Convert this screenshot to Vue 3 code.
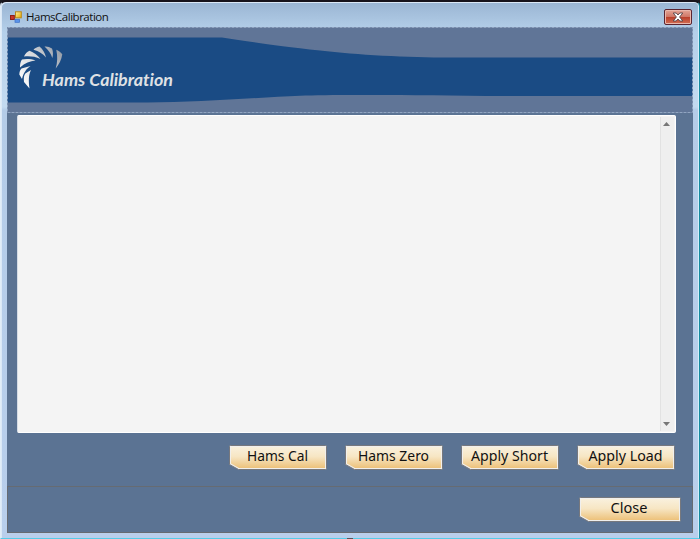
<script setup>
const actions = [
  { label: 'Hams Cal', width: 61 },
  { label: 'Hams Zero', width: 71 },
  { label: 'Apply Short', width: 77 },
  { label: 'Apply Load', width: 74 },
]
</script>

<template>
  <div class="window">
    <header class="titlebar">
      <svg class="app-icon" width="12" height="12" viewBox="0 0 12 12">
        <defs>
          <linearGradient id="gold" x2="1" y2="1"><stop stop-color="#fff3a0" /><stop offset="1" stop-color="#e5a800" /></linearGradient>
        </defs>
        <rect x="0.5" y="4.5" width="3.8" height="4" fill="#c9362b" stroke="#8e2017" />
        <rect x="5.5" y="0.8" width="5.8" height="6" fill="url(#gold)" stroke="#b98719" />
        <rect x="5" y="8.5" width="4.6" height="2.8" fill="#5b93e8" stroke="#3b6fc7" stroke-width=".7" />
      </svg>
      <span class="title">HamsCalibration</span>
      <button class="close-x" aria-label="Close window">
        <svg width="12" height="10" viewBox="0 0 12 10">
          <path d="M1.2 1h3L6 3l1.8-2h3L7.6 5l3.2 4h-3L6 7 4.2 9h-3L4.4 5z" fill="#fff" stroke="#554448" stroke-width=".9" />
        </svg>
      </button>
    </header>
    <main class="client">
      <section class="banner">
        <svg class="art" width="686" height="86" viewBox="0 0 686 86">
          <path d="M0 10.500H215C240 14 265 18.500 313 23.500C350 28 400 30.500 443 30.500H686V69H480C390 68 325 67.500 293 68.800C250 70.500 190 75.500 140 75.500H0Z" fill="#1a4b84" />
          <rect x=".5" y=".5" width="685" height="85" fill="none" stroke="#91a5c1" stroke-dasharray="3 1" />
          <defs>
            <linearGradient id="silver" gradientUnits="userSpaceOnUse" x1="13" y1="58" x2="55" y2="24"><stop stop-color="#fff" /><stop offset=".55" stop-color="#d5d8dc" /><stop offset="1" stop-color="#929aa5" /></linearGradient>
          </defs>
          <g fill="url(#silver)">
            <path d="M24 43C21.500 48 21.500 54 22.500 61.500L17 55C16.500 51 17 48 18.300 46.500Z" />
            <path d="M23.500 39C19 42 16.500 46 15 52L12.300 47.500C12.500 44.500 13 43 14.500 41.500Z" />
            <path d="M28.500 33.500C23 34 18 36 13 40.500C13 37 13.500 34.500 15 32.500C19 31.700 24 31.800 28.500 33.500Z" />
            <path d="M33.500 32C28 29.500 23 29 17 29.500C18 27 20 25 22.500 23.800C27 25.500 30.500 28 33.500 32Z" />
            <path d="M39 30.500C35.500 26.500 32 24.500 26.500 22.800C28 21 30 20 32.500 19.500C36 22.500 38 26 39 30.500Z" />
            <path d="M45.300 31C44 26.500 41.500 23 37.500 19.500C40.500 19.200 42.500 20 45 21.500C46.200 24.500 46.300 28 45.300 31Z" />
            <path d="M48.700 41.500C50.500 35.500 50.700 29.500 49.300 22.800C51.500 23.800 53.500 25.200 55.300 27.200C54.500 32.500 52 37.500 48.700 41.500Z" />
          </g>
          <text class="brand" x="35" y="58.500" textLength="131" lengthAdjust="spacingAndGlyphs">Hams Calibration</text>
        </svg>
      </section>
      <section class="output">
        <div class="scrollbar">
          <svg width="7" height="4"><path d="M0 4 3.500 0 7 4Z" fill="#777" /></svg>
          <svg width="7" height="4"><path d="M0 0H7L3.500 4Z" fill="#777" /></svg>
        </div>
      </section>
      <nav class="actions">
        <button v-for="a in actions" :key="a.label" class="btn">
          <svg width="98" height="25" viewBox="0 0 98 25">
            <defs><linearGradient id="cream" x2="0" y2="1"><stop stop-color="#f9f0dc" /><stop offset=".45" stop-color="#f7e6c4" /><stop offset="1" stop-color="#edc27b" /></linearGradient></defs>
            <path d="M.5 1.500Q.5.5 1.500.5H96.500Q97.500.5 97.500 1.500V23.500Q97.500 24.500 96.500 24.500H9.500L.5 19.500Z" fill="#f0efed" stroke="#77787d" />
            <path d="M2 2H96V23H10L2 18.500Z" fill="url(#cream)" />
            <text class="label" x="48.500" y="16" text-anchor="middle" :textLength="a.width" lengthAdjust="spacingAndGlyphs">{{ a.label }}</text>
          </svg>
        </button>
      </nav>
      <footer class="footer">
        <button class="btn">
          <svg width="102" height="25" viewBox="0 0 102 25">
            <path d="M.5 1.500Q.5.5 1.500.5H100.500Q101.500.5 101.500 1.500V23.500Q101.500 24.500 100.500 24.500H9.500L.5 19.500Z" fill="#f0efed" stroke="#77787d" />
            <path d="M2 2H100V23H10L2 18.500Z" fill="url(#cream)" />
            <text class="label" x="50" y="16" text-anchor="middle" textLength="37" lengthAdjust="spacingAndGlyphs">Close</text>
          </svg>
        </button>
      </footer>
    </main>
    <i class="notch"></i>
  </div>
</template>

<style>
html, body { margin: 0; background: #1a1a22; overflow: hidden; }
</style>
<style scoped>
.window {
  box-sizing: border-box; position: relative; width: 700px; height: 539px;
  padding: 0 5px 5px 6px;
  border: 1px solid #35b5ce; border-top: 2px solid #17131b; border-left-color: #e1edf8;
  border-bottom-color: #55cce9; border-right-color: #168aa0;
  border-radius: 6px 6px 0 0;
  background: linear-gradient(#9ab5d3 0, #b5d0ea 30px, #c3daf0 105px, #b4cce8 108px, #b9cfec 100%);
  box-shadow: inset 1px 1px #dbe8f6, inset -1px 0 #d2edfa;
  font-family: "Noto Sans", sans-serif;
}
.titlebar { height: 25px; display: flex; align-items: flex-start; }
.app-icon { margin: 9px 0 0 3px; }
.title { margin: 7px 0 0 4px; font: 11.5px/16px "Open Sans", sans-serif; color: #111; letter-spacing: -.48px; }
.close-x {
  box-sizing: border-box; width: 28px; height: 16px; margin: 7px 2px 0 auto; padding: 0; display: grid; place-items: center;
  border: 1px solid #5b2430; border-radius: 2px;
  background: linear-gradient(#e4a597 0, #d07766 48%, #b93d29 50%, #d36f55 100%);
  box-shadow: inset 0 0 0 1px #eab7ac;
}
.client { width: 686px; height: 506px; background: #5b7393; display: flex; flex-direction: column; }
.banner { height: 86px; background: #607597; }
.art { display: block; }
.brand { font: italic 700 17px Lato, sans-serif; font-variant-ligatures: none; fill: #dfe1e4; }
.output {
  box-sizing: border-box; width: 659px; height: 318px; margin: 2px 0 0 10px; padding: 1px;
  border: 1px solid #fff; border-left-color: #d5dce5; border-radius: 2px;
  background: #f4f4f4; display: flex; justify-content: flex-end;
}
.scrollbar {
  box-sizing: border-box; width: 14px; padding: 5px 3px 5px 2px; border-left: 1px solid #e2e2e2; background: #efefef;
  display: flex; flex-direction: column; justify-content: space-between;
}
.actions { display: flex; gap: 18px; margin: 12px 0 0 222px; }
.btn { padding: 0; border: 0; background: none; display: block; height: 25px; }
.btn svg { display: block; }
.label { font: 14.3px "Noto Sans", sans-serif; fill: #111; }
.footer {
  box-sizing: border-box; height: 47px; margin-top: auto; padding: 10px 11px 0 0;
  border: 1px solid #666b72; display: flex; justify-content: flex-end;
}
.notch { position: absolute; left: 346px; bottom: -1px; width: 6px; height: 1px; background: #55545b; }
</style>
